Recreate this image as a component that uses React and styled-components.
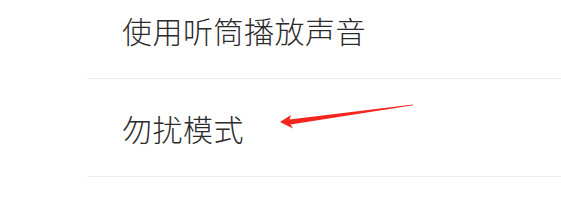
import React from 'react';
import styled, { createGlobalStyle } from 'styled-components';

const GlobalStyle = createGlobalStyle`
  html, body {
    margin: 0;
    padding: 0;
    background: #fff;
  }
`;

const Screen = styled.div`
  position: relative;
  width: 561px;
  height: 216px;
  overflow: hidden;
  background: #fff;
`;

const List = styled.ul`
  list-style: none;
  margin: -19px 0 0 0;
  padding: 0;
`;

const Row = styled.li`
  display: flex;
  align-items: center;
  height: 97px;
  margin-left: 87px;
  padding-left: 35px;
  border-bottom: 1px solid #ededed;
`;

const Label = styled.span`
  font-family: "Noto Sans CJK SC", "Noto Sans", sans-serif;
  font-size: 30px;
  font-weight: 300;
  color: #2b2b2b;
  letter-spacing: 0.5px;
`;

const Annotation = styled.svg`
  position: absolute;
  left: 0;
  top: 0;
  pointer-events: none;
`;

const items = ['使用听筒播放声音', '勿扰模式'];

const App = () => (
  <>
    <GlobalStyle />
    <Screen>
      <List>
        {items.map((t) => (
          <Row key={t}>
            <Label>{t}</Label>
          </Row>
        ))}
      </List>
      <Annotation width="561" height="216" viewBox="0 0 561 216">
        <polygon
          points="280,122 291,115 289.5,119.5 413,104.4 413,105.2 290.5,124.5 293,128.5"
          fill="#f2261e"
        />
      </Annotation>
    </Screen>
  </>
);

export default App;
